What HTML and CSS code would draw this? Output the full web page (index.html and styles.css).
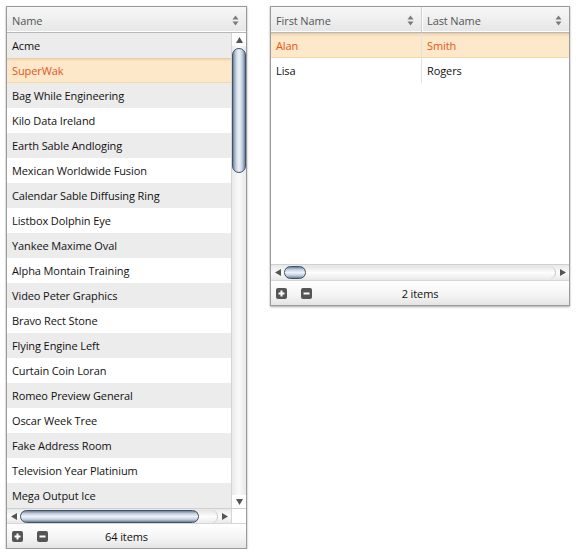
FILE: index.html
```html
<!DOCTYPE html>
<html>
<head>
<meta charset="utf-8">
<link rel="stylesheet" href="styles.css">
</head>
<body>
<div class="page">
  <div class="panel panel-left">
    <div class="header">
      <div class="hcell">
        <span>Name</span>
        <svg class="sort" width="7" height="11" viewBox="0 0 7 11"><path d="M3.5 0.5 L6.5 4.5 L0.5 4.5 Z M3.5 10.5 L6.5 6.5 L0.5 6.5 Z" fill="#7a7a7a"/></svg>
      </div>
    </div>
    <div class="body-left">
      <div class="rows">
        <div class="row odd">Acme</div>
        <div class="row sel">SuperWak</div>
        <div class="row odd">Bag While Engineering</div>
        <div class="row">Kilo Data Ireland</div>
        <div class="row odd">Earth Sable Andloging</div>
        <div class="row">Mexican Worldwide Fusion</div>
        <div class="row odd">Calendar Sable Diffusing Ring</div>
        <div class="row">Listbox Dolphin Eye</div>
        <div class="row odd">Yankee Maxime Oval</div>
        <div class="row">Alpha Montain Training</div>
        <div class="row odd">Video Peter Graphics</div>
        <div class="row">Bravo Rect Stone</div>
        <div class="row odd">Flying Engine Left</div>
        <div class="row">Curtain Coin Loran</div>
        <div class="row odd">Romeo Preview General</div>
        <div class="row">Oscar Week Tree</div>
        <div class="row odd">Fake Address Room</div>
        <div class="row">Television Year Platinium</div>
        <div class="row odd">Mega Output Ice</div>
      </div>
      <div class="vscroll">
        <div class="arrow-v"><svg width="7" height="6" viewBox="0 0 7 6"><path d="M3.5 0 L7 6 L0 6 Z" fill="#555"/></svg></div>
        <div class="vtrack">
          <div class="vthumb"></div>
        </div>
        <div class="arrow-v"><svg width="7" height="6" viewBox="0 0 7 6"><path d="M0 0 L7 0 L3.5 6 Z" fill="#555"/></svg></div>
      </div>
    </div>
    <div class="hbar-row">
      <div class="hscroll">
        <div class="arrow-h"><svg width="6" height="7" viewBox="0 0 6 7"><path d="M0 3.5 L6 0 L6 7 Z" fill="#555"/></svg></div>
        <div class="htrack"><div class="hthumb hthumb-left"></div></div>
        <div class="arrow-h"><svg width="6" height="7" viewBox="0 0 6 7"><path d="M0 0 L6 3.5 L0 7 Z" fill="#555"/></svg></div>
      </div>
      <div class="corner"></div>
    </div>
    <div class="footer">
      <svg class="btn" width="11" height="11" viewBox="0 0 11 11"><rect width="11" height="11" rx="2" fill="#555"/><path d="M5.5 2.5 V8.5 M2.5 5.5 H8.5" stroke="#fff" stroke-width="2"/></svg>
      <svg class="btn" width="11" height="11" viewBox="0 0 11 11"><rect width="11" height="11" rx="2" fill="#555"/><path d="M2.5 5.5 H8.5" stroke="#fff" stroke-width="2"/></svg>
      <span class="count">64 items</span>
    </div>
  </div>

  <div class="panel panel-right">
    <div class="header header-two">
      <div class="hcell hcell-first">
        <span>First Name</span>
        <svg class="sort" width="7" height="11" viewBox="0 0 7 11"><path d="M3.5 0.5 L6.5 4.5 L0.5 4.5 Z M3.5 10.5 L6.5 6.5 L0.5 6.5 Z" fill="#7a7a7a"/></svg>
      </div>
      <div class="hcell">
        <span>Last Name</span>
        <svg class="sort" width="7" height="11" viewBox="0 0 7 11"><path d="M3.5 0.5 L6.5 4.5 L0.5 4.5 Z M3.5 10.5 L6.5 6.5 L0.5 6.5 Z" fill="#7a7a7a"/></svg>
      </div>
    </div>
    <div class="body-right">
      <div class="row2 sel"><div class="c c1">Alan</div><div class="c">Smith</div></div>
      <div class="row2"><div class="c c1">Lisa</div><div class="c">Rogers</div></div>
    </div>
    <div class="hscroll hscroll-right">
      <div class="arrow-h"><svg width="6" height="7" viewBox="0 0 6 7"><path d="M0 3.5 L6 0 L6 7 Z" fill="#555"/></svg></div>
      <div class="htrack"><div class="hthumb hthumb-right"></div></div>
      <div class="arrow-h"><svg width="6" height="7" viewBox="0 0 6 7"><path d="M0 0 L6 3.5 L0 7 Z" fill="#555"/></svg></div>
    </div>
    <div class="footer">
      <svg class="btn" width="11" height="11" viewBox="0 0 11 11"><rect width="11" height="11" rx="2" fill="#555"/><path d="M5.5 2.5 V8.5 M2.5 5.5 H8.5" stroke="#fff" stroke-width="2"/></svg>
      <svg class="btn" width="11" height="11" viewBox="0 0 11 11"><rect width="11" height="11" rx="2" fill="#555"/><path d="M2.5 5.5 H8.5" stroke="#fff" stroke-width="2"/></svg>
      <span class="count">2 items</span>
    </div>
  </div>
</div>
</body>
</html>
```

FILE: styles.css
```css
*, *::before, *::after { box-sizing: border-box; }
html, body {
  margin: 0;
  padding: 0;
  background: #ffffff;
}
body {
  font-family: "Open Sans", "Lato", sans-serif;
  font-size: 11px;
  letter-spacing: -0.1px;
  color: #111;
}
.page {
  display: flex;
  align-items: flex-start;
  gap: 23px;
  padding: 6px 0 0 6px;
}
.panel {
  border: 1px solid #9a9a9a;
  background: #fff;
  display: flex;
  flex-direction: column;
  box-shadow: 0 1px 2px rgba(0,0,0,0.35);
}
.panel-left { width: 241px; }
.panel-right { width: 300px; }

.header {
  height: 26px;
  display: flex;
  background: linear-gradient(#f7f7f7, #e6e6e6);
  border-bottom: 1px solid #b8b8b8;
  box-shadow: inset 0 -1px 0 #fff;
}
.hcell {
  flex: 1;
  display: flex;
  align-items: center;
  justify-content: space-between;
  padding: 1px 7px 0 5px;
  color: #555;
}
.header-two .hcell-first {
  flex: 0 0 151px;
  border-right: 1px solid #d0d0d0;
  box-shadow: 1px 0 0 #fff;
}
.sort { display: block; }

.body-left {
  display: flex;
  height: 475px;
}
.rows {
  flex: 1;
  display: flex;
  flex-direction: column;
}
.row {
  height: 25px;
  line-height: 25px;
  padding-left: 5px;
  background: #fff;
  white-space: nowrap;
}
.row.odd { background: #ececec; }
.sel, .row.sel {
  background: linear-gradient(#e2c9a6, #f8dfbd 2px, #fde8c9 4px, #fde8c9);
  color: #e4561c;
  border-bottom: 1px solid #f6d9a6;
}

.vscroll {
  width: 15px;
  border-left: 1px solid #d4d4d4;
  display: flex;
  flex-direction: column;
  background: linear-gradient(to right, #e9e9e9, #fafafa 50%, #e9e9e9);
}
.arrow-v {
  height: 13px;
  display: flex;
  align-items: center;
  justify-content: center;
  background: #fff;
}
.vtrack {
  flex: 1;
  padding: 1px 0;
}
.vthumb {
  margin-top: 1px;
  height: 125px;
  width: 14px;
  border: 1px solid #3f5268;
  border-radius: 7px;
  background: linear-gradient(to right, #6d8098, #c7d3e2 25%, #eef2f6 50%, #c7d3e2 75%, #6d8098);
}

.hbar-row {
  display: flex;
  height: 15px;
  border-top: 1px solid #cfcfcf;
}
.hscroll {
  flex: 1;
  display: flex;
  align-items: center;
  background: linear-gradient(#e8e8e8, #fbfbfb 50%, #e8e8e8);
}
.hscroll-right {
  height: 16px;
  flex: none;
  border-top: 1px solid #cfcfcf;
}
.corner {
  width: 15px;
  border-left: 1px solid #d4d4d4;
  background: #fff;
}
.arrow-h {
  width: 13px;
  height: 14px;
  display: flex;
  align-items: center;
  justify-content: center;
}
.htrack {
  flex: 1;
  height: 13px;
  border-radius: 7px;
  border-right: 1px solid #c8c8c8;
  background: linear-gradient(#e4e4e4, #fdfdfd 50%, #ececec);
}
.hthumb {
  height: 13px;
  border: 1px solid #3f5268;
  border-radius: 7px;
  background: linear-gradient(#6d8098, #c7d3e2 25%, #eef2f6 50%, #c7d3e2 75%, #6d8098);
}
.hthumb-left { width: 179px; }
.hthumb-right { width: 22px; }

.footer {
  height: 25px;
  display: flex;
  align-items: center;
  position: relative;
  border-top: 1px solid #d6d6d6;
  background: linear-gradient(#ffffff, #f4f4f4 60%, #e4e4e4);
  padding-left: 5px;
  gap: 14px;
}
.btn { display: block; }
.count {
  position: absolute;
  left: 0;
  right: 0;
  text-align: center;
  color: #111;
}

.body-right {
  height: 231px;
  display: flex;
  flex-direction: column;
}
.row2 {
  display: flex;
  height: 25px;
  line-height: 25px;
}
.c {
  flex: 1;
  padding-left: 5px;
}
.c1 {
  flex: 0 0 151px;
  border-right: 1px solid #e2e2e2;
}
```
